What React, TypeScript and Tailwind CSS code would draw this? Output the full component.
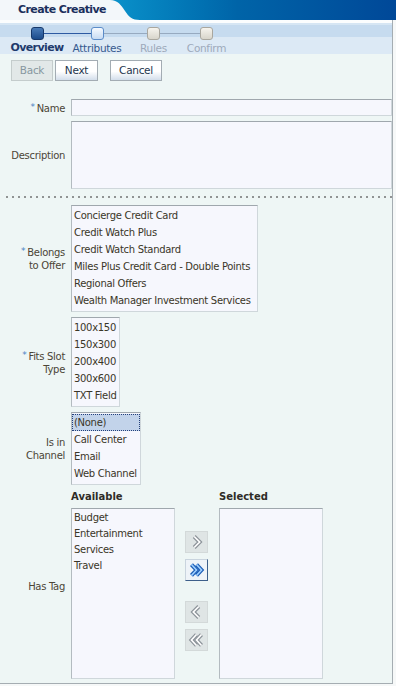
import React from "react";

const font = "font-['DejaVu_Sans',Verdana,sans-serif]";

function Star() {
  return <span className="text-[#4a82c4] text-[9px] align-[2px] mr-[2px]">*</span>;
}

type StopKind = "current" | "next" | "disabled";
const stops: { label: string; w: string; kind: StopKind }[] = [
  { label: "Overview", w: "w-[60px]", kind: "current" },
  { label: "Attributes", w: "w-[60px]", kind: "next" },
  { label: "Rules", w: "w-[53px]", kind: "disabled" },
  { label: "Confirm", w: "w-[53px]", kind: "disabled" },
];

function segColor(i: number) {
  return i === 0 ? "bg-[#2d5aa2]" : "bg-[#97aac0]";
}

function Train() {
  return (
    <div className="relative h-[34px]">
      <div className="h-[3px] bg-[#fbfdfe]" />
      <div className="h-[2px] bg-[#d6e6f4]" />
      <div className="h-[12px] bg-[#c6dbef]" />
      <div className="h-[17px] bg-[#dce9f5]" />
      <div className="absolute inset-0 flex pl-[7px]">
        {stops.map((s, i) => {
          const sq =
            s.kind === "current"
              ? "bg-linear-to-b from-[#4a7cb8] to-[#1b4b8b] border-[#17386a]"
              : s.kind === "next"
              ? "bg-linear-to-b from-[#f6faff] to-[#c7dbf2] border-[#5b8cc9]"
              : "bg-linear-to-b from-[#f6f4ee] to-[#d8d5cb] border-[#a9a79f]";
          const lc =
            s.kind === "current"
              ? "font-bold text-[11px] tracking-[-0.6px] text-[#1e3a6c]"
              : s.kind === "next"
              ? "text-[#36598e] text-[10.5px]"
              : "text-[#9eaabb] text-[10.5px]";
          return (
            <div key={s.label} className={`relative flex flex-col items-center ${s.w}`}>
              {i > 0 && <div className={`absolute left-0 top-[13px] h-[1px] w-1/2 ${segColor(i - 1)}`} />}
              {i < stops.length - 1 && (
                <div className={`absolute right-0 top-[13px] h-[1px] w-1/2 ${segColor(i)}`} />
              )}
              <div className={`relative mt-[7px] w-[13px] h-[13px] rounded-[3px] border ${sq}`} />
              <div className={`mt-[2px] leading-[12px] whitespace-nowrap ${lc}`}>{s.label}</div>
            </div>
          );
        })}
      </div>
    </div>
  );
}

function Buttons() {
  const base = "h-[21px] border flex items-center justify-center leading-[19px] text-[10.5px]";
  const enabled =
    "bg-linear-to-b from-[#ffffff] from-55% to-[#d3deeb] border-[#a3acb3] text-[#24354f]";
  return (
    <div className="flex mt-[6px] pl-[11px]">
      <div className={`${base} w-[42px] bg-[#e2e8e8] border-[#c4cccc] text-[#8797a0]`}>Back</div>
      <div className={`${base} ${enabled} w-[43px] ml-[2px]`}>Next</div>
      <div className={`${base} ${enabled} w-[52px] ml-[12px]`}>Cancel</div>
    </div>
  );
}

function Label({ children }: { children: React.ReactNode }) {
  return (
    <div className="w-[65px] shrink-0 text-right leading-[13px] text-[#4b4536]">{children}</div>
  );
}

const fieldBorder =
  "bg-[#f6f7fd] border border-[#cfd7db] border-t-[#9fa7ad] border-l-[#b3bbc0]";

function ListBox({
  items,
  w,
  h,
  itemH,
  selected,
}: {
  items: string[];
  w: string;
  h: string;
  itemH: string;
  selected?: number;
}) {
  return (
    <div className={`${w} ${h} ${fieldBorder} pt-[1px] pb-[2px] overflow-hidden`}>
      {items.map((t, i) => (
        <div
          key={t}
          className={`${itemH} px-[2px] whitespace-nowrap text-[#3a3628] ${
            selected === i
              ? "bg-[#c2d3ea] outline-1 outline-dotted outline-[#23407a] -outline-offset-1"
              : ""
          }`}
        >
          {t}
        </div>
      ))}
    </div>
  );
}

function Chev({ dir, double, active }: { dir: "r" | "l"; double?: boolean; active?: boolean }) {
  const pts =
    dir === "r"
      ? double
        ? ["6,5 11.5,11 6,17", "11.5,5 17,11 11.5,17"]
        : ["9,5 15,11 9,17"]
      : double
      ? ["11.5,5 6,11 11.5,17", "17,5 11.5,11 17,17"]
      : ["14,5 8,11 14,17"];
  const outer = active ? "#1b5cb6" : "#8d949a";
  const inner = active ? "#9fd0ff" : "#ffffff";
  return (
    <svg width="23" height="22" viewBox="0 0 23 22">
      {pts.map((p) => (
        <polyline key={"o" + p} points={p} fill="none" stroke={outer} strokeWidth="4.4" />
      ))}
      {pts.map((p) => (
        <polyline key={"i" + p} points={p} fill="none" stroke={inner} strokeWidth="1.8" />
      ))}
    </svg>
  );
}

function ShuttleBtn({ children, active }: { children: React.ReactNode; active?: boolean }) {
  return (
    <div
      className={`w-[23px] h-[22px] border flex items-center justify-center ${
        active
          ? "bg-[#eef3f8] border-[#c9d4de] border-r-[#3d5f8a] border-b-[#3d5f8a]"
          : "bg-[#dfe5e5] border-[#d3d9d9]"
      }`}
    >
      {children}
    </div>
  );
}

function Form() {
  return (
    <div className="flex flex-col mt-[18px]">
      <div className="flex items-center">
        <Label>
          <Star />
          Name
        </Label>
        <div className={`ml-[6px] w-[321px] h-[17px] ${fieldBorder}`} />
      </div>
      <div className="flex items-center mt-[5px]">
        <Label>Description</Label>
        <div className={`ml-[6px] w-[321px] h-[68px] ${fieldBorder}`} />
      </div>
      <div className="mt-[7px] ml-[6px] h-[2px] w-[386px] bg-[linear-gradient(to_right,#909393_2px,transparent_2px)] bg-[length:6px_2px]" />
      <div className="flex items-center mt-[7px]">
        <Label>
          <Star />
          Belongs
          <br />
          to Offer
        </Label>
        <div className="ml-[6px]">
          <ListBox
            w="w-[187px]"
            h="h-[107px]"
            itemH="h-[17px] leading-[17px]"
            items={[
              "Concierge Credit Card",
              "Credit Watch Plus",
              "Credit Watch Standard",
              "Miles Plus Credit Card - Double Points",
              "Regional Offers",
              "Wealth Manager Investment Services",
            ]}
          />
        </div>
      </div>
      <div className="flex items-center mt-[5px]">
        <Label>
          <Star />
          Fits Slot
          <br />
          Type
        </Label>
        <div className="ml-[6px]">
          <ListBox
            w="w-[49px]"
            h="h-[90px]"
            itemH="h-[17px] leading-[17px]"
            items={["100x150", "150x300", "200x400", "300x600", "TXT Field"]}
          />
        </div>
      </div>
      <div className="flex items-center mt-[5px]">
        <Label>
          Is in
          <br />
          Channel
        </Label>
        <div className="ml-[6px]">
          <ListBox
            w="w-[70px]"
            h="h-[73px]"
            itemH="h-[17px] leading-[17px]"
            selected={0}
            items={["(None)", "Call Center", "Email", "Web Channel"]}
          />
        </div>
      </div>
      <div className="flex items-center mt-[4px]">
        <div className="pt-[4px]">
          <Label>Has Tag</Label>
        </div>
        <div className="ml-[6px] flex">
          <div className="flex flex-col">
            <div className="h-[16px] leading-[16px] font-bold tracking-normal text-[#2e2c27]">
              Available
            </div>
            <div className="mt-[3px]">
              <ListBox
                w="w-[104px]"
                h="h-[171px]"
                itemH="h-[16px] leading-[16px]"
                items={["Budget", "Entertainment", "Services", "Travel"]}
              />
            </div>
          </div>
          <div className="ml-[10px] mt-[42px] flex flex-col">
            <ShuttleBtn>
              <Chev dir="r" />
            </ShuttleBtn>
            <div className="mt-[6px]">
              <ShuttleBtn active>
                <Chev dir="r" double active />
              </ShuttleBtn>
            </div>
            <div className="mt-[20px]">
              <ShuttleBtn>
                <Chev dir="l" />
              </ShuttleBtn>
            </div>
            <div className="mt-[6px]">
              <ShuttleBtn>
                <Chev dir="l" double />
              </ShuttleBtn>
            </div>
          </div>
          <div className="ml-[11px] flex flex-col">
            <div className="h-[16px] leading-[16px] font-bold tracking-normal text-[#2e2c27]">
              Selected
            </div>
            <div className="mt-[3px]">
              <ListBox w="w-[104px]" h="h-[171px]" itemH="h-[16px] leading-[16px]" items={[]} />
            </div>
          </div>
        </div>
      </div>
    </div>
  );
}

function Header() {
  return (
    <div className="relative h-[20px] bg-linear-to-r from-[#0a8fc8] from-30% via-[#0064a8] via-60% to-[#004898]">
      <svg className="absolute left-0 top-0" width="150" height="20" viewBox="0 0 150 20">
        <path d="M0 0H110C118 0 121 5 125 11C129 17 132 20 140 20H0Z" fill="#f3f7fa" />
      </svg>
      <div className="relative pl-[18px] pt-[3px] text-[11px] leading-[14px] font-bold tracking-[-0.6px] text-[#1b2f5c]">
        Create Creative
      </div>
    </div>
  );
}

export default function App() {
  return (
    <div
      className={`w-[396px] h-[686px] overflow-hidden bg-[#f6f8f8] ${font} text-[10px] tracking-[-0.3px]`}
    >
      <Header />
      <div className="w-[393px] h-[664px] border-r border-b border-[#a5adb2] bg-[#eef6f5] flex flex-col">
        <Train />
        <Buttons />
        <Form />
      </div>
    </div>
  );
}
